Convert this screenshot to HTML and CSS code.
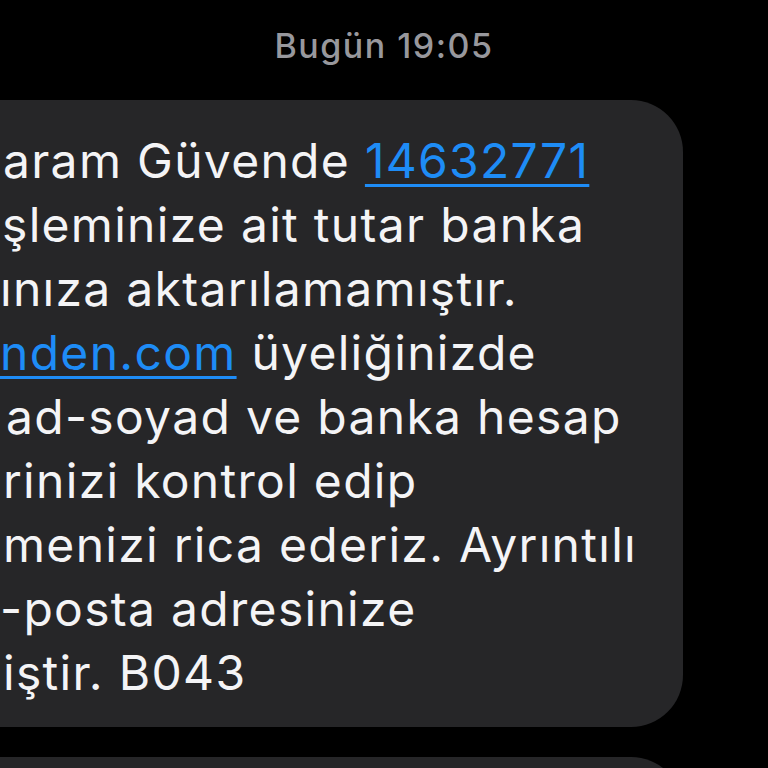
FILE: index.html
```html
<!DOCTYPE html>
<html lang="tr">
<head>
<meta charset="utf-8">
<title>Mesaj</title>
<link rel="stylesheet" href="styles.css">
</head>
<body>
<div class="screen">
  <div class="stamp">Bugün 19:05</div>
  <div class="bubble">
    <div class="line l1">aram Güvende <span class="link">14632771</span></div>
    <div class="line l2">şleminize ait tutar banka</div>
    <div class="line l3">ınıza aktarılamamıştır.</div>
    <div class="line l4"><span class="link">nden.com</span> üyeliğinizde</div>
    <div class="line l5">ad-soyad ve banka hesap</div>
    <div class="line l6">rinizi kontrol edip</div>
    <div class="line l7">menizi rica ederiz. Ayrıntılı</div>
    <div class="line l8">-posta adresinize</div>
    <div class="line l9">iştir. B043</div>
  </div>
  <div class="bubble next"></div>
</div>
</body>
</html>
```

FILE: styles.css
```css
html, body {
  margin: 0;
  padding: 0;
  background: #000;
}
.screen {
  width: 768px;
  height: 768px;
  overflow: hidden;
  background: #000;
  font-family: Inter, "Noto Sans", "Liberation Sans", sans-serif;
}
.stamp {
  height: 100px;
  box-sizing: border-box;
  padding-top: 26px;
  text-align: center;
  color: #98989d;
  font-size: 34px;
  line-height: 40px;
  font-weight: 500;
  letter-spacing: 1.5px;
}
.bubble {
  margin-left: -60px;
  width: 743px;
  box-sizing: border-box;
  background: #262628;
  border-radius: 52px;
  padding: 29px 0 22px 60px;
  color: #f4f4f6;
  font-size: 48px;
  line-height: 64px;
  letter-spacing: 1.3px;
  white-space: nowrap;
}
.bubble.next {
  margin-top: 30px;
  height: 120px;
  padding: 0;
}
.line { overflow: hidden; }
.link {
  color: #1e8cf6;
  text-decoration: underline;
  text-decoration-thickness: 3px;
  text-underline-offset: 6px;
}
.l1 { padding-left: 3px; }
.l2 { padding-left: 2px; }
.l3 { padding-left: 0; }
.l4 { padding-left: 0; }
.l5 { padding-left: 6px; }
.l6 { padding-left: 3px; }
.l7 { padding-left: 3px; }
.l8 { padding-left: 0; }
.l9 { padding-left: 3px; }
```
